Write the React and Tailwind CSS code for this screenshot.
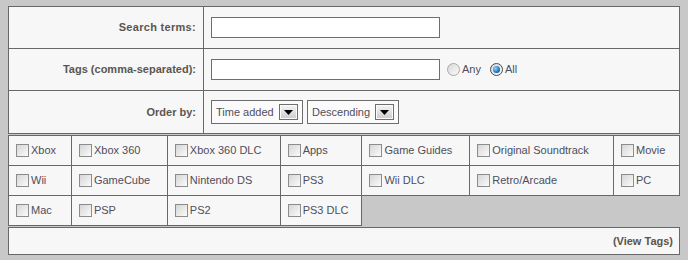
import React from "react";

const tagRows = [
  ["Xbox", "Xbox 360", "Xbox 360 DLC", "Apps", "Game Guides", "Original Soundtrack", "Movie"],
  ["Wii", "GameCube", "Nintendo DS", "PS3", "Wii DLC", "Retro/Arcade", "PC"],
  ["Mac", "PSP", "PS2", "PS3 DLC"],
];

const colWidths = ["w-[63px]", "w-[96px]", "w-[113px]", "w-[82px]", "w-[108px]", "w-[144px]", "w-[66px]"];

const Checkbox = () => (
  <span className="inline-block w-[13px] h-[13px] border border-[#8c8c8c] bg-linear-to-br from-[#d6d6d6] to-[#fbfbfb] shrink-0" />
);

const Radio = ({ checked }) => (
  <span
    className={`inline-flex items-center justify-center w-[13px] h-[13px] rounded-full border ${
      checked ? "border-[#4a4a4a]" : "border-[#a8a8a8]"
    } bg-linear-to-br from-[#d8d8d8] to-[#fafafa] shrink-0`}
  >
    {checked && (
      <span className="block w-[7px] h-[7px] rounded-full bg-[radial-gradient(circle_at_35%_35%,#8fd3ff,#0d5aa8_75%)]" />
    )}
  </span>
);

const Select = ({ label, width }) => (
  <div className={`flex items-center justify-between h-[24px] ${width} border border-[#6e6e6e] bg-[#fbfbfb] pl-[4px] pr-[4px]`}>
    <span>{label}</span>
    <span className="flex items-center justify-center w-[19px] h-[16px] border border-[#6e6e6e] p-[1px]">
      <span className="flex items-center justify-center w-full h-full bg-linear-to-b from-[#f2f2f2] to-[#cfcfcf]">
        <svg width="9" height="5" viewBox="0 0 9 5">
          <polygon points="0,0 9,0 4.5,5" fill="#000" />
        </svg>
      </span>
    </span>
  </div>
);

const TextInput = () => (
  <div className="w-[229px] h-[21px] border border-[#6e6e6e] bg-white" />
);

const App = () => {
  return (
    <div
      className="w-[688px] h-[260px] bg-[#c8c8c8] pt-[6px] px-[8px] text-[11px] text-[#4e4e5c]"
      style={{ fontFamily: '"Liberation Sans", Arial, sans-serif' }}
    >
      {/* Search form */}
      <table className="w-[672px] border-collapse bg-[#f7f7f7]">
        <tbody>
          <tr className="h-[42px]">
            <td className="w-[195px] border border-[#686868] text-right pr-[7px] font-bold text-[#5a5650] tracking-[0.3px]">
              Search terms:
            </td>
            <td className="border border-[#686868] pl-[7px]">
              <TextInput />
            </td>
          </tr>
          <tr className="h-[42px]">
            <td className="border border-[#686868] text-right pr-[7px] font-bold text-[#5a5650]">
              Tags (comma-separated):
            </td>
            <td className="border border-[#686868] pl-[7px]">
              <div className="flex items-center">
                <TextInput />
                <span className="ml-[7px] flex items-center gap-[2px]">
                  <Radio /> Any
                </span>
                <span className="ml-[9px] flex items-center gap-[2px]">
                  <Radio checked /> All
                </span>
              </div>
            </td>
          </tr>
          <tr className="h-[43px]">
            <td className="border border-[#686868] text-right pr-[7px] font-bold text-[#5a5650]">
              Order by:
            </td>
            <td className="border border-[#686868] pl-[7px]">
              <div className="flex items-center gap-[4px]">
                <Select label="Time added" width="w-[92px]" />
                <Select label="Descending" width="w-[92px]" />
              </div>
            </td>
          </tr>
        </tbody>
      </table>

      {/* Tag checkboxes */}
      <table className="w-[672px] border-collapse mt-[1px]">
        <tbody>
          {tagRows.map((row, i) => (
            <tr key={i} className="h-[30px]">
              {row.map((tag, j) => (
                <td key={tag} className={`${colWidths[j]} border border-[#686868] bg-[#f7f7f7] pl-[7px] p-0`}>
                  <label className="flex items-center gap-[2px]">
                    <Checkbox />
                    <span>{tag}</span>
                  </label>
                </td>
              ))}
            </tr>
          ))}
        </tbody>
      </table>

      <div className="mt-[1px] h-[28px] w-[672px] border border-[#686868] bg-[#f7f7f7] flex items-center justify-end pr-[6px] font-bold text-[#5e5446]">
        (View Tags)
      </div>
    </div>
  );
};

export default App;
